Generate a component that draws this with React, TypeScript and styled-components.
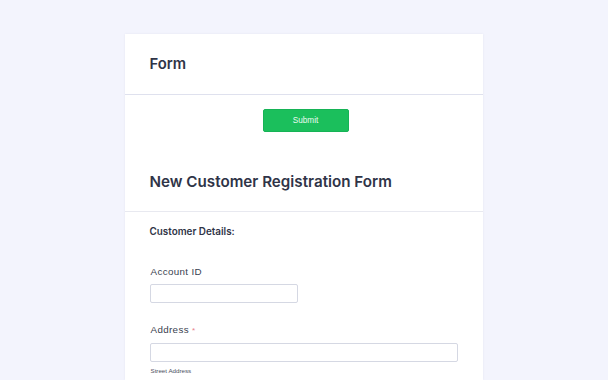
import styled, { createGlobalStyle } from "styled-components";

const GlobalStyle = createGlobalStyle`
  html, body {
    margin: 0;
    padding: 0;
    background: #f3f4fd;
    font-family: Inter, "Noto Sans", sans-serif;
    color: #2f3447;
  }
`;

const Page = styled.div`
  display: flex;
  justify-content: center;
  padding-top: 34px;
  height: 346px;
  overflow: hidden;
`;

const Card = styled.div`
  width: 358px;
  margin-left: -1px;
  background: #ffffff;
  box-shadow: 0 0 2px rgba(60, 70, 120, 0.08);
`;

const Header = styled.div`
  height: 60px;
  display: flex;
  align-items: center;
  padding: 0 25px;
  border-bottom: 1px solid #dfe1ee;
`;

const PageTitle = styled.h1`
  margin: 0;
  font-size: 14.8px;
  font-weight: 600;
  color: #2f3447;
`;

const ButtonRow = styled.div`
  display: flex;
  justify-content: center;
  padding: 14px 0 0 4px;
`;

const SubmitButton = styled.button`
  width: 86px;
  height: 23px;
  border: 1px solid #16b356;
  border-radius: 2px;
  background: #1bbf5c;
  color: #eafaf0;
  font-family: "Liberation Sans", Arial, sans-serif;
  font-size: 8.2px;
  cursor: pointer;
`;

const FormHead = styled.div`
  height: 79px;
  display: flex;
  align-items: center;
  padding: 0 25px;
  border-bottom: 1px solid #e8e9f0;
`;

const FormTitle = styled.h2`
  margin: 0;
  font-size: 15.2px;
  font-weight: 600;
  color: #2f3447;
  padding-top: 19px;
`;

const Body = styled.div`
  padding: 12px 25px 0;
`;

const Section = styled.h3`
  margin: 0;
  font-size: 9.9px;
  font-weight: 600;
  line-height: 14px;
  color: #2f3447;
`;

const Field = styled.div<{ $top: number }>`
  display: flex;
  flex-direction: column;
  margin-top: ${(p) => p.$top}px;
`;

const Label = styled.label`
  font-family: "Liberation Sans", Arial, sans-serif;
  font-size: 9.8px;
  letter-spacing: 0.35px;
  line-height: 12px;
  color: #3a3f50;
  padding-left: 1px;
`;

const Required = styled.span`
  color: #e8828a;
  font-size: 8px;
`;

const Input = styled.input<{ $width: string }>`
  box-sizing: border-box;
  width: ${(p) => p.$width};
  height: 19px;
  margin-top: 6px;
  border: 1px solid #d5d8e3;
  border-radius: 2px;
  background: #fff;
`;

const Hint = styled.span`
  font-family: "Liberation Sans", Arial, sans-serif;
  font-size: 6.2px;
  color: #4a4f60;
  margin-top: 5px;
  padding-left: 1px;
`;

export default function App() {
  return (
    <>
      <GlobalStyle />
      <Page>
        <Card>
          <Header>
            <PageTitle>Form</PageTitle>
          </Header>
          <ButtonRow>
            <SubmitButton>Submit</SubmitButton>
          </ButtonRow>
          <FormHead>
            <FormTitle>New Customer Registration Form</FormTitle>
          </FormHead>
          <Body>
            <Section>Customer Details:</Section>
            <Field $top={28}>
              <Label>Account ID</Label>
              <Input $width="148px" />
            </Field>
            <Field $top={21}>
              <Label>
                Address <Required>*</Required>
              </Label>
              <Input $width="100%" />
              <Hint>Street Address</Hint>
            </Field>
          </Body>
        </Card>
      </Page>
    </>
  );
}
